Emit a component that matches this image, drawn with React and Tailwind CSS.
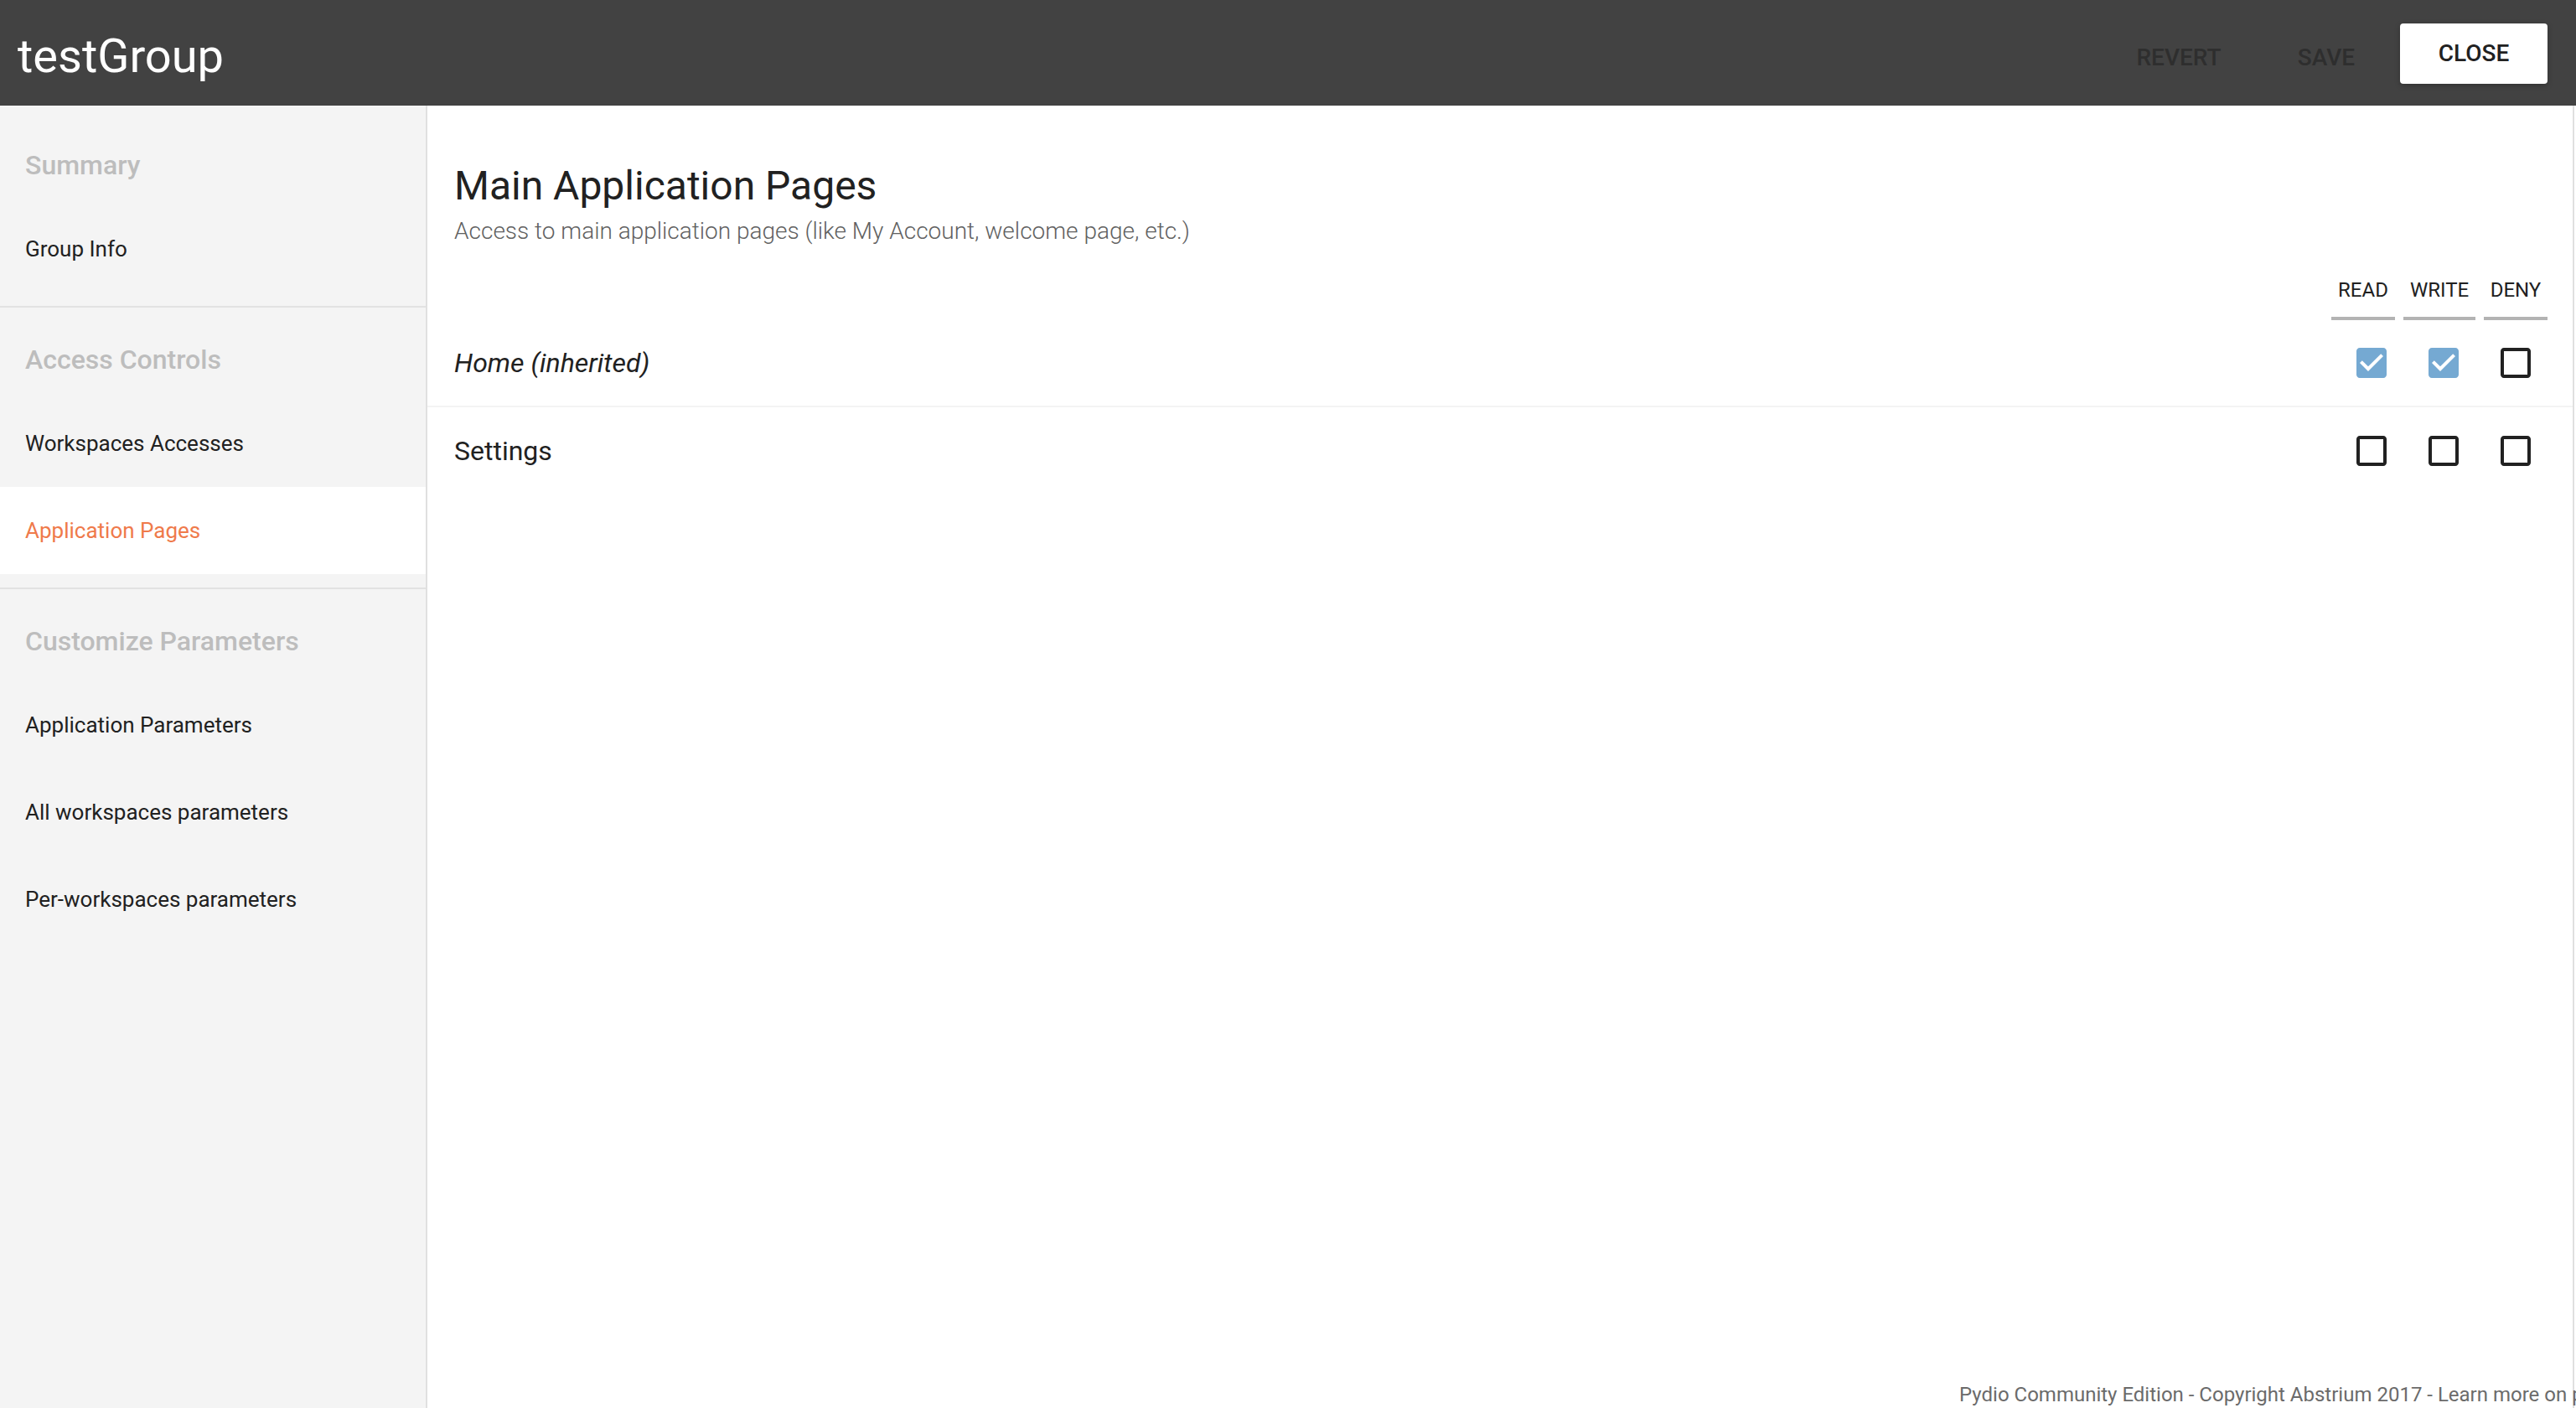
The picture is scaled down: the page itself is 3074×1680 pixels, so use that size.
import React from "react";

const CheckedBox = () => (
  <svg width="48" height="48" viewBox="0 0 24 24">
    <path
      fill="#75a9d2"
      d="M19 3H5c-1.11 0-2 .9-2 2v14c0 1.1.89 2 2 2h14c1.11 0 2-.9 2-2V5c0-1.1-.89-2-2-2zm-9 14l-5-5 1.41-1.41L10 14.17l7.59-7.59L19 8l-9 9z"
    />
  </svg>
);

const EmptyBox = () => (
  <svg width="48" height="48" viewBox="0 0 24 24">
    <path
      fill="#212121"
      d="M19 5v14H5V5h14m0-2H5c-1.1 0-2 .9-2 2v14c0 1.1.9 2 2 2h14c1.1 0 2-.9 2-2V5c0-1.1-.9-2-2-2z"
    />
  </svg>
);

const SectionHeader = ({ children, first }) => (
  <div
    className={
      "flex h-[96px] items-center pl-[30px] text-[32px] font-medium text-[#bdbdbd] " +
      (first ? "mt-[23px]" : "mt-[14px]")
    }
  >
    {children}
  </div>
);

const Item = ({ children, active }) => (
  <div
    className={
      "flex h-[104px] items-center pl-[30px] text-[26px] " +
      (active ? "bg-white text-[#ef7a4b]" : "text-[#212121]")
    }
  >
    {children}
  </div>
);

const Section = ({ title, items, first, last }) => (
  <div className={"pb-[16px] " + (last ? "" : "border-b-2 border-[#e2e2e2]")}>
    <SectionHeader first={first}>{title}</SectionHeader>
    {items.map((it) => (
      <Item key={it.label} active={it.active}>
        {it.label}
      </Item>
    ))}
  </div>
);

const Row = ({ label, italic, values, border }) => (
  <div
    className={
      "flex h-[104px] items-center pl-[32px] pr-[25px] " +
      (border ? "border-b-2 border-[#f3f3f3]" : "")
    }
  >
    <div className={"flex-1 text-[32px] text-[#212121] " + (italic ? "italic" : "")}>
      {label}
    </div>
    {values.map((v, i) => (
      <div key={i} className="flex w-[86px] items-center justify-center">
        {v ? <CheckedBox /> : <EmptyBox />}
      </div>
    ))}
  </div>
);

export default function App() {
  return (
    <div className="flex h-[1680px] w-full flex-col overflow-hidden bg-white font-['Roboto',sans-serif]">
      {/* Header */}
      <div className="flex h-[126px] shrink-0 items-start bg-[#424242]">
        <div className="ml-[21px] mt-[35px] text-[56px] leading-[64px] text-white">testGroup</div>
        <div className="ml-auto mr-[34px] mt-[28px] flex">
          <div className="flex h-[72px] w-[176px] items-center justify-center pt-[10px] text-[28px] font-medium text-[#2e2e2e]">
            REVERT
          </div>
          <div className="flex h-[72px] w-[176px] items-center justify-center pt-[10px] text-[28px] font-medium text-[#2e2e2e]">
            SAVE
          </div>
          <div className="flex h-[72px] w-[176px] items-center justify-center rounded-[4px] bg-white text-[28px] font-medium text-[#212121] shadow-[0_2px_6px_rgba(0,0,0,0.25)]">
            CLOSE
          </div>
        </div>
      </div>

      {/* Body */}
      <div className="flex min-h-0 flex-1">
        {/* Sidebar */}
        <div className="w-[510px] shrink-0 border-r-2 border-[#e0e0e0] bg-[#f4f4f4]">
          <Section first title="Summary" items={[{ label: "Group Info" }]} />
          <Section
            title="Access Controls"
            items={[{ label: "Workspaces Accesses" }, { label: "Application Pages", active: true }]}
          />
          <Section
            last
            title="Customize Parameters"
            items={[
              { label: "Application Parameters" },
              { label: "All workspaces parameters" },
              { label: "Per-workspaces parameters" },
            ]}
          />
        </div>

        {/* Main */}
        <div className="flex min-w-0 flex-1 flex-col border-r-2 border-[#e0e0e0]">
          <div className="px-[32px] pt-[68px]">
            <div className="text-[48px] leading-[56px] text-[#212121]">Main Application Pages</div>
            <div className="mt-[8px] text-[28px] font-light leading-[36px] text-[#616161]">
              Access to main application pages (like My Account, welcome page, etc.)
            </div>
          </div>

          <div className="mt-[36px] flex justify-end gap-[10px] pr-[30px]">
            {[
              ["READ", "w-[76px]"],
              ["WRITE", "w-[86px]"],
              ["DENY", "w-[76px]"],
            ].map(([t, w]) => (
              <div
                key={t}
                className={
                  w +
                  " border-b-4 border-[#b3b3b3] pb-[16px] text-center text-[24px] leading-[32px] text-[#212121]"
                }
              >
                {t}
              </div>
            ))}
          </div>

          <Row label="Home (inherited)" italic values={[true, true, false]} border />
          <Row label="Settings" values={[false, false, false]} />

          <div className="flex-1" />
          <div className="h-[32px] whitespace-nowrap pl-[1828px] text-[24px] leading-[32px] text-[#6b6b6b]">
            Pydio Community Edition - Copyright Abstrium 2017 - Learn more on pydio.com
          </div>
        </div>
        <div className="w-[2px] shrink-0" />
      </div>
    </div>
  );
}
